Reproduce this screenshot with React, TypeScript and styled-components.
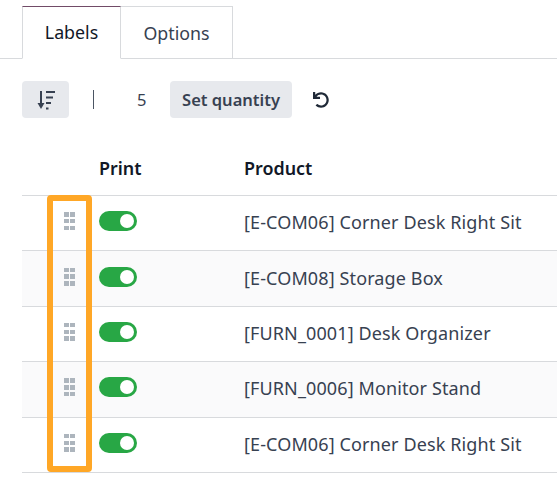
import React from "react";
import styled, { createGlobalStyle } from "styled-components";
import { FaUndo } from "react-icons/fa";

const GlobalStyle = createGlobalStyle`
  html, body {
    margin: 0;
    background: #fff;
    overflow: hidden;
  }
  body {
    font-family: "Noto Sans", "Open Sans", sans-serif;
    font-size: 18px;
    color: #374151;
  }
`;

const Page = styled.div`
  width: 557px;
  height: 477px;
  padding-top: 6px;
  box-sizing: border-box;
  overflow: hidden;
`;

const TabBar = styled.div`
  display: flex;
  height: 52px;
  padding-left: 22px;
  border-bottom: 1px solid #d8dadd;
`;

const Tab = styled.div<{ $active?: boolean }>`
  height: 53px;
  width: ${(p) => (p.$active ? "99px" : "112px")};
  box-sizing: border-box;
  display: flex;
  align-items: center;
  justify-content: center;
  font-size: 17.8px;
  padding-bottom: 1px;
  border: 1px solid #d8dadd;
  border-left-width: ${(p) => (p.$active ? "1px" : "0")};
  border-bottom: ${(p) => (p.$active ? "1px solid #fff" : "0")};
  border-top-color: ${(p) => (p.$active ? "#714b67" : "#d8dadd")};
  color: ${(p) => (p.$active ? "#111827" : "#374151")};
`;

const Toolbar = styled.div`
  display: flex;
  align-items: center;
  height: 37px;
  margin: 22px 0 0 22px;
`;

const GreyButton = styled.div`
  height: 37px;
  box-sizing: border-box;
  display: flex;
  align-items: center;
  justify-content: center;
  background: #e7e9ed;
  border-radius: 4px;
  font-size: 16.5px;
  font-weight: 600;
  color: #374151;
`;

const SortButton = styled(GreyButton)`
  width: 47px;
`;

const QuantityButton = styled(GreyButton)`
  width: 122px;
`;

const Caret = styled.span`
  width: 1px;
  height: 19px;
  margin-left: 24px;
  background: #4b5563;
`;

const Quantity = styled.span`
  width: 11px;
  margin: 0 22px 0 43px;
  font-size: 16.5px;
`;

const ResetIcon = styled.div`
  display: flex;
  margin-left: 21px;
  color: #1f2937;
`;

const Table = styled.div`
  position: relative;
  margin: 22px 0 0 22px;
`;

const Columns = styled.div`
  display: grid;
  grid-template-columns: 77px 145px 1fr;
  align-items: center;
`;

const HeadRow = styled(Columns)`
  height: 56px;
  box-sizing: border-box;
  border-bottom: 1px solid #d8dadd;
  font-weight: 600;
  font-size: 17.9px;
  color: #111827;
`;

const Row = styled(Columns)<{ $stripe: boolean }>`
  height: 55.4px;
  box-sizing: border-box;
  border-bottom: 1px solid #d8dadd;
  background: ${(p) => (p.$stripe ? "#fafafb" : "#fff")};
`;

const ProductName = styled.span`
  letter-spacing: 0.12px;
  padding-bottom: 2px;
`;

const RowStart = styled.div`
  display: flex;
  justify-content: flex-end;
  padding: 0 24px 4px 0;
`;

const Handle = styled.div`
  display: grid;
  grid-template-columns: 5px 5px;
  grid-auto-rows: 4.5px;
  gap: 2.25px 1.5px;
`;

const Dot = styled.span`
  background: #adb5bd;
`;

const Toggle = styled.div`
  width: 38px;
  height: 20px;
  margin-bottom: 4px;
  border-radius: 10px;
  background: #28a745;
  position: relative;
  &::after {
    content: "";
    position: absolute;
    top: 3px;
    right: 3px;
    width: 14px;
    height: 14px;
    border-radius: 50%;
    background: #fff;
  }
`;

const Highlight = styled.div`
  position: absolute;
  left: 25px;
  top: 55px;
  width: 45px;
  height: 277px;
  box-sizing: border-box;
  border: 6px solid #ffa726;
  border-radius: 4px;
  pointer-events: none;
`;

const products = [
  "[E-COM06] Corner Desk Right Sit",
  "[E-COM08] Storage Box",
  "[FURN_0001] Desk Organizer",
  "[FURN_0006] Monitor Stand",
  "[E-COM06] Corner Desk Right Sit",
];

const SortIcon = () => (
  <svg width="18" height="20" viewBox="0 0 18 20" fill="none" stroke="#374151" strokeWidth="2">
    <path d="M4 1v14" />
    <path d="M0.5 13h7L4 19z" fill="#374151" stroke="none" />
    <path d="M9 2h9M9 7.5h7M9 13h5M9 18.5h2.5" />
  </svg>
);

export default function App() {
  return (
    <Page>
      <GlobalStyle />
      <TabBar>
        <Tab $active>Labels</Tab>
        <Tab>Options</Tab>
      </TabBar>
      <Toolbar>
        <SortButton>
          <SortIcon />
        </SortButton>
        <Caret />
        <Quantity>5</Quantity>
        <QuantityButton>Set quantity</QuantityButton>
        <ResetIcon>
          <FaUndo size={16} />
        </ResetIcon>
      </Toolbar>
      <Table>
        <HeadRow>
          <span />
          <span>Print</span>
          <span>Product</span>
        </HeadRow>
        {products.map((name, i) => (
          <Row key={i} $stripe={i % 2 === 1}>
            <RowStart>
              <Handle>
                {Array.from({ length: 6 }).map((_, d) => (
                  <Dot key={d} />
                ))}
              </Handle>
            </RowStart>
            <Toggle />
            <ProductName>{name}</ProductName>
          </Row>
        ))}
        <Highlight />
      </Table>
    </Page>
  );
}
